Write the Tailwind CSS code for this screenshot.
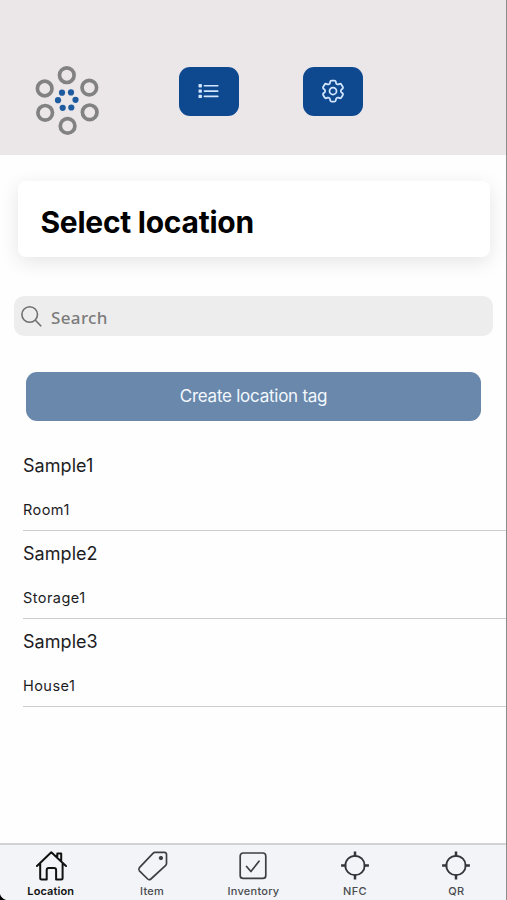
<!DOCTYPE html>
<html lang="en">
<head>
<meta charset="utf-8">
<title>Select location</title>
<script src="https://cdn.jsdelivr.net/npm/@tailwindcss/browser@4"></script>
</head>
<body class="bg-[#fefefe]">
<div class="relative flex h-[900px] w-[507px] flex-col overflow-hidden bg-[#fefefe] font-['Inter',sans-serif] text-[#1c1c1e]">
  <header class="flex h-[155px] shrink-0 items-start bg-[#ebe7e9] pt-[64px] pl-[34px]">
    <svg class="h-[74px] w-[68px]" viewBox="34 64 68 74" fill="none">
      <g stroke="#828282" stroke-width="3.7">
        <circle cx="66.8" cy="75.2" r="7.3"/><circle cx="44.7" cy="88.5" r="7.3"/><circle cx="89.3" cy="87.6" r="7.3"/>
        <circle cx="45.2" cy="112.8" r="7.3"/><circle cx="89.7" cy="112.3" r="7.3"/><circle cx="67.6" cy="125.9" r="7.3"/>
      </g>
      <g fill="#1f5c9f">
        <circle cx="62" cy="92.7" r="3.1"/><circle cx="71" cy="92.4" r="3.1"/><circle cx="58" cy="100.2" r="3.1"/>
        <circle cx="75.5" cy="99.8" r="3.1"/><circle cx="62.7" cy="107.8" r="3.1"/><circle cx="71.3" cy="107.5" r="3.1"/>
      </g>
    </svg>
    <button aria-label="List" class="mt-[3px] ml-[77px] flex h-[48.5px] w-[60px] items-center justify-center rounded-[11px] bg-[#0e4990]">
      <svg class="h-[16px] w-[22px]" viewBox="0 0 22 16" fill="#d3e6ff">
        <rect x="0.5" y="1" width="3.4" height="3.4" rx=".7"/><rect x="0.5" y="6.4" width="3.4" height="3.4" rx=".7"/><rect x="0.5" y="11.7" width="3.4" height="3.4" rx=".7"/>
        <rect x="5.6" y="1.9" width="15" height="1.7" rx=".8"/><rect x="5.6" y="7.2" width="15" height="1.7" rx=".8"/><rect x="5.6" y="12.5" width="15" height="1.7" rx=".8"/>
      </svg>
    </button>
    <button aria-label="Settings" class="mt-[3px] ml-[63.5px] flex h-[48.5px] w-[60px] items-center justify-center rounded-[11px] bg-[#0e4990]">
      <svg class="h-[28px] w-[28px]" viewBox="0 0 24 24" fill="none" stroke="#d3e6ff" stroke-width="1.5" stroke-linejoin="round">
        <path d="M9.594 3.94c.09-.542.56-.94 1.11-.94h2.593c.55 0 1.02.398 1.11.94l.213 1.281c.063.374.313.686.645.87.074.04.147.083.22.127.325.196.72.257 1.075.124l1.217-.456a1.125 1.125 0 0 1 1.37.49l1.296 2.247a1.125 1.125 0 0 1-.26 1.431l-1.003.827c-.293.241-.438.613-.43.992a7.723 7.723 0 0 1 0 .255c-.008.378.137.75.43.991l1.004.827c.424.35.534.955.26 1.43l-1.298 2.247a1.125 1.125 0 0 1-1.369.491l-1.217-.456c-.355-.133-.75-.072-1.076.124a6.47 6.47 0 0 1-.22.128c-.331.183-.581.495-.644.869l-.213 1.281c-.09.543-.56.94-1.11.94h-2.594c-.55 0-1.019-.398-1.11-.94l-.213-1.281c-.062-.374-.312-.686-.644-.87a6.52 6.52 0 0 1-.22-.127c-.325-.196-.72-.257-1.076-.124l-1.217.456a1.125 1.125 0 0 1-1.369-.49l-1.297-2.247a1.125 1.125 0 0 1 .26-1.431l1.004-.827c.292-.24.437-.613.43-.991a6.932 6.932 0 0 1 0-.255c.007-.38-.138-.751-.43-.992l-1.004-.827a1.125 1.125 0 0 1-.26-1.43l1.297-2.247a1.125 1.125 0 0 1 1.37-.491l1.216.456c.356.133.751.072 1.076-.124.072-.044.146-.086.22-.128.332-.183.582-.495.644-.869l.214-1.28Z"/>
        <circle cx="12" cy="12" r="3"/>
      </svg>
    </button>
  </header>

  <main class="flex flex-1 flex-col">
    <div class="mt-[26px] mr-[17px] ml-[18px] flex h-[76px] items-center rounded-[8px] bg-white pt-[6px] pl-[22.5px] shadow-[0_5px_20px_rgba(0,0,0,0.10)]">
      <h1 class="text-[30px] leading-[36px] font-bold tracking-[-0.27px] text-black">Select location</h1>
    </div>
    <label class="mt-[39px] mr-[14px] ml-[14px] flex h-[40px] items-center rounded-[10px] bg-[#ededed] pl-[7px]">
      <svg class="h-[22px] w-[22px]" viewBox="0 0 22 22" fill="none" stroke="#6f6f6f" stroke-width="1.6" stroke-linecap="round"><circle cx="8.7" cy="9.5" r="7.8"/><path d="M14.4 15.3l5.3 5.5"/></svg>
      <span class="mt-[3px] ml-[8px] font-['Noto_Sans',sans-serif] text-[17px] leading-[24px] font-medium tracking-[0.35px] text-[#7c7c7c]">Search</span>
    </label>
    <button class="mt-[36px] mr-[26px] ml-[26px] flex h-[48.5px] items-center justify-center rounded-[11px] bg-[#6988ab] pt-px text-[17px] tracking-[-0.25px] text-[#f3f8ff]">Create location tag</button>
    <ul class="mt-[22px] ml-[23px]">
      <li class="flex h-[88px] flex-col border-b-[1.5px] border-[#cbcccc] pt-[11px]">
        <span class="text-[18px] leading-[24px] tracking-[0.05px]">Sample1</span><span class="mt-[22px] text-[14.5px] leading-[20px] tracking-[0.45px]">Room1</span></li>
      <li class="flex h-[88px] flex-col border-b-[1.5px] border-[#cbcccc] pt-[11px]">
        <span class="text-[18px] leading-[24px] tracking-[0.05px]">Sample2</span><span class="mt-[22px] text-[14.5px] leading-[20px] tracking-[0.45px]">Storage1</span></li>
      <li class="flex h-[88px] flex-col border-b-[1.5px] border-[#cbcccc] pt-[11px]">
        <span class="text-[18px] leading-[24px] tracking-[0.05px]">Sample3</span><span class="mt-[22px] text-[14.5px] leading-[20px] tracking-[0.45px]">House1</span></li>
    </ul>
  </main>

  <nav class="grid h-[57px] shrink-0 grid-cols-5 border-t-2 border-[#d2d3d5] bg-[#f2f4f8] text-[11px] leading-[14px] font-medium tracking-[0.25px] text-[#4a4b4f]">
    <a class="flex flex-col items-center pt-[5px] font-semibold tracking-[0.1px] text-[#111]">
      <svg class="h-[32px] w-[32px]" viewBox="0 0 32 32" fill="none" stroke="#111" stroke-width="2" stroke-linecap="round" stroke-linejoin="round"><path d="M2 16L16.3 2.2 31 16M5.2 13.3V28q0 1.5 1.5 1.5h5V20q0-2 2-2h5.4q2 0 2 2v9.5h5q1.5 0 1.5-1.5V13.3M22.3 7V3.5h3.9v7.7"/></svg>
      <span class="mt-[2px]">Location</span></a>
    <a class="flex flex-col items-center pt-[5px]">
      <svg class="h-[32px] w-[32px]" viewBox="-0.7 0 32 32" fill="none" stroke="#3e3f43" stroke-width="1.7" stroke-linejoin="round"><path d="M18.2 2.3h9.3q2.3 0 2.3 2.3v9q0 1-.8 1.8L14.2 29q-1.7 1.4-3.2 0L2.7 20.8q-1.3-1.6 0-3.1L16.5 3.1q.7-.8 1.7-.8z"/><circle cx="24.2" cy="8" r="1.7" fill="#3e3f43" stroke-width="1"/></svg>
      <span class="mt-[2px]">Item</span></a>
    <a class="flex flex-col items-center pt-[5px]">
      <svg class="h-[32px] w-[32px]" viewBox="0 0 32 32" fill="none" stroke="#3e3f43" stroke-width="1.7" stroke-linecap="round" stroke-linejoin="round"><rect x="3.2" y="3" width="25.6" height="25.4" rx="3"/><path d="M9.6 16.5l4.3 5L22 11.2"/></svg>
      <span class="mt-[2px]">Inventory</span></a>
    <a class="flex flex-col items-center pt-[5px]">
      <svg class="h-[32px] w-[32px]" viewBox="0 0 32 32" fill="none" stroke="#34353a" stroke-width="1.8"><circle cx="16" cy="15.5" r="9.7"/><path stroke-width="2.5" d="M16 1.6v5.2M16 24.2v5.2M2.1 15.5h5.2M24.7 15.5h5.2"/></svg>
      <span class="mt-[2px]">NFC</span></a>
    <a class="flex flex-col items-center pt-[5px]">
      <svg class="h-[32px] w-[32px]" viewBox="0 0 32 32" fill="none" stroke="#34353a" stroke-width="1.8"><circle cx="16" cy="15.5" r="9.7"/><path stroke-width="2.5" d="M16 1.6v5.2M16 24.2v5.2M2.1 15.5h5.2M24.7 15.5h5.2"/></svg>
      <span class="mt-[2px]">QR</span></a>
  </nav>
  <div class="absolute top-0 right-0 h-full w-px bg-[#8d8d8d]"></div>
  <svg class="absolute bottom-0 left-0 h-[6px] w-[6px]" viewBox="0 0 6 6"><path d="M0 0Q1 4 6 6H0z" fill="#000"/></svg>
</div>
</body>
</html>
